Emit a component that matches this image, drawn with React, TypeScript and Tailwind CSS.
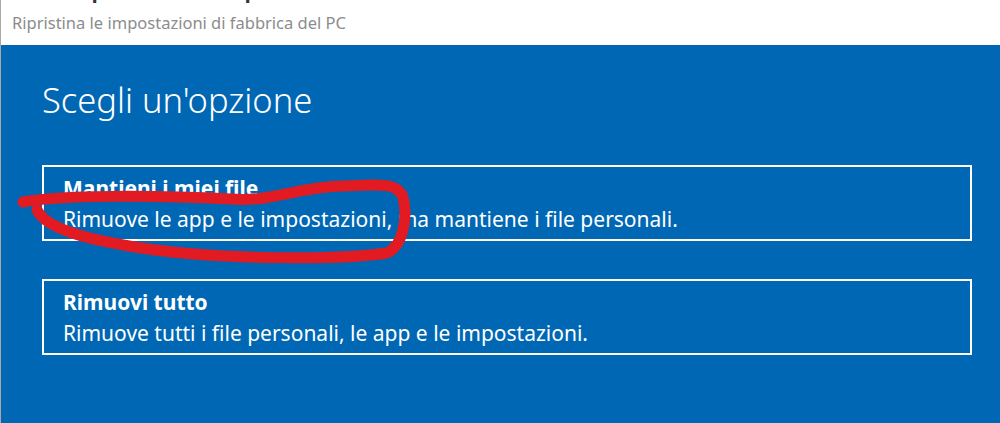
import React from "react";

const font = { fontFamily: '"Noto Sans", "Open Sans", sans-serif' };

function OptionCard({ title, description }: { title: string; description: string }) {
    return (
        <button
            type="button"
            className="flex h-[76px] w-[930px] flex-col items-start border-2 border-white pl-[19px] pt-[7px] text-left text-white"
        >
            <span className="text-[21px] font-bold leading-[28px]">{title}</span>
            <span className="mt-[3px] text-[21px] leading-[28px]">{description}</span>
        </button>
    );
}

export default function App() {
    return (
        <div className="relative flex h-[423px] w-[1000px] flex-col overflow-hidden border-l border-[#a9a9a9]" style={font}>
            {/* Title bar */}
            <div className="flex h-[45px] flex-col bg-white">
                <div className="h-[3px] overflow-hidden pl-[68px]">
                    <div className="-mt-[22px] text-[24px] font-semibold leading-[24px] text-[#333]">Ripristina le impostazioni</div>
                </div>
                <div className="pl-[11px] pt-[9px] text-[16.5px] leading-[22px] text-[#8c8c8c]">
                    Ripristina le impostazioni di fabbrica del PC
                </div>
            </div>

            {/* Body */}
            <div className="flex flex-1 flex-col bg-[#0067b4] pl-[41px]">
                <h1 className="mt-[32px] text-[34.5px] font-light leading-[46px] text-white">Scegli un'opzione</h1>
                <div className="mt-[42px] flex flex-col gap-[38px]">
                    <OptionCard
                        title="Mantieni i miei file"
                        description="Rimuove le app e le impostazioni, ma mantiene i file personali."
                    />
                    <OptionCard
                        title="Rimuovi tutto"
                        description="Rimuove tutti i file personali, le app e le impostazioni."
                    />
                </div>
            </div>

            {/* Hand-drawn red annotation */}
            <svg className="pointer-events-none absolute left-0 top-0" width="1000" height="423" viewBox="0 0 1000 423">
                <path
                    d="M 22 202 C 60 195, 150 195, 230 199 C 272 202, 292 188, 340 186 C 372 185, 396 181, 402 197 C 407 218, 402 246, 386 253 C 340 260, 220 260, 140 248 C 90 240, 46 230, 36 210"
                    fill="none"
                    stroke="#e21b22"
                    strokeWidth="11"
                    strokeLinecap="round"
                    strokeLinejoin="round"
                />
            </svg>
        </div>
    );
}
